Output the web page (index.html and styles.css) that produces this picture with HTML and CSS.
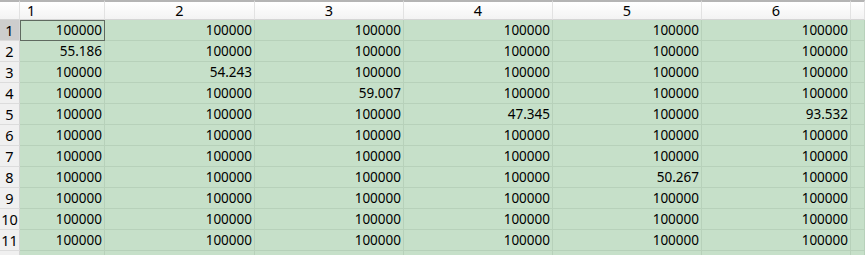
FILE: index.html
```html
<!DOCTYPE html>
<html>
<head>
<meta charset="utf-8">
<link rel="stylesheet" href="styles.css">
</head>
<body>
<div class="sheet">
  <div class="hd corner"></div>
  <div class="hd first">1</div>
  <div class="hd">2</div>
  <div class="hd">3</div>
  <div class="hd">4</div>
  <div class="hd">5</div>
  <div class="hd">6</div>
  <div class="hd"></div>

  <div class="rh sel">1</div>
  <div class="c cur">100000</div><div class="c">100000</div><div class="c">100000</div><div class="c">100000</div><div class="c">100000</div><div class="c">100000</div><div class="c"></div>

  <div class="rh">2</div>
  <div class="c">55.186</div><div class="c">100000</div><div class="c">100000</div><div class="c">100000</div><div class="c">100000</div><div class="c">100000</div><div class="c"></div>

  <div class="rh">3</div>
  <div class="c">100000</div><div class="c">54.243</div><div class="c">100000</div><div class="c">100000</div><div class="c">100000</div><div class="c">100000</div><div class="c"></div>

  <div class="rh">4</div>
  <div class="c">100000</div><div class="c">100000</div><div class="c">59.007</div><div class="c">100000</div><div class="c">100000</div><div class="c">100000</div><div class="c"></div>

  <div class="rh">5</div>
  <div class="c">100000</div><div class="c">100000</div><div class="c">100000</div><div class="c">47.345</div><div class="c">100000</div><div class="c">93.532</div><div class="c"></div>

  <div class="rh">6</div>
  <div class="c">100000</div><div class="c">100000</div><div class="c">100000</div><div class="c">100000</div><div class="c">100000</div><div class="c">100000</div><div class="c"></div>

  <div class="rh">7</div>
  <div class="c">100000</div><div class="c">100000</div><div class="c">100000</div><div class="c">100000</div><div class="c">100000</div><div class="c">100000</div><div class="c"></div>

  <div class="rh">8</div>
  <div class="c">100000</div><div class="c">100000</div><div class="c">100000</div><div class="c">100000</div><div class="c">50.267</div><div class="c">100000</div><div class="c"></div>

  <div class="rh">9</div>
  <div class="c">100000</div><div class="c">100000</div><div class="c">100000</div><div class="c">100000</div><div class="c">100000</div><div class="c">100000</div><div class="c"></div>

  <div class="rh">10</div>
  <div class="c">100000</div><div class="c">100000</div><div class="c">100000</div><div class="c">100000</div><div class="c">100000</div><div class="c">100000</div><div class="c"></div>

  <div class="rh">11</div>
  <div class="c">100000</div><div class="c">100000</div><div class="c">100000</div><div class="c">100000</div><div class="c">100000</div><div class="c">100000</div><div class="c"></div>

  <div class="rh"></div>
  <div class="c"></div><div class="c"></div><div class="c"></div><div class="c"></div><div class="c"></div><div class="c"></div><div class="c"></div>
</div>
</body>
</html>
```

FILE: styles.css
```css
* { box-sizing: border-box; }
html, body {
  margin: 0;
  padding: 0;
  background: #ffffff;
  overflow: hidden;
  height: 255px;
}
.sheet {
  display: grid;
  grid-template-columns: 20px 85px 150px 149px 149px 149px 149px 1fr;
  grid-auto-rows: 21px;
  grid-template-rows: 20px;
  width: 865px;
  height: 255px;
  overflow: hidden;
  font-family: "Noto Sans", "Open Sans", sans-serif;
  font-size: 13.5px;
  color: #000;
}
.hd {
  background: linear-gradient(#ffffff, #f3f3f3);
  border-top: 2px solid #b4b4b4;
  border-right: 1px solid #e2e2e2;
  border-bottom: 1px solid #d5d5d5;
  text-align: center;
  line-height: 17px;
  font-size: 14.5px;
}
.hd.first {
  text-align: left;
  padding-left: 7px;
}
.rh {
  background: #f0f0f0;
  border-right: 1px solid #d5d5d5;
  border-bottom: 1px solid #dcdcdc;
  text-align: center;
  line-height: 20px;
  font-size: 14.5px;
}
.rh.sel {
  background: #cdcdcd;
}
.c {
  background: #c6e0c9;
  border-right: 1px solid #b7d1ba;
  border-bottom: 1px solid #b7d1ba;
  text-align: right;
  padding-right: 2px;
  line-height: 21px;
  white-space: nowrap;
  overflow: hidden;
}
.c.cur {
  outline: 1px solid #5f6a60;
  outline-offset: -1px;
}
```
